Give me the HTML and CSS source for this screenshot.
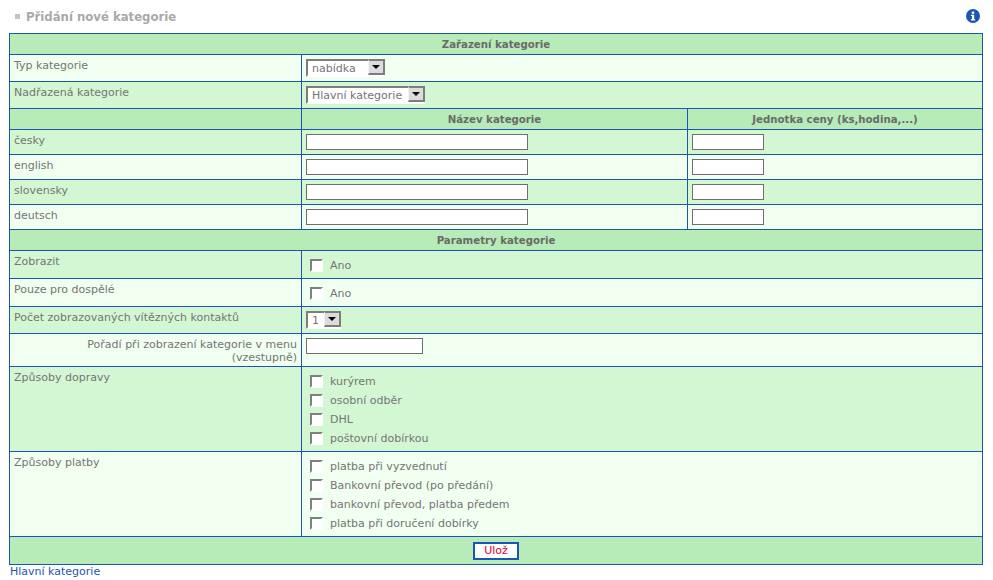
FILE: index.html
```html
<!DOCTYPE html>
<html lang="cs">
<head>
    <meta charset="UTF-8">
    <title>Přidání nové kategorie</title>
    <link rel="stylesheet" href="styles.css">
</head>
<body>
    <div class="title-bar">
        <h1><span class="bullet"></span>Přidání nové kategorie</h1>
        <svg class="info-icon" width="14" height="14" viewBox="0 0 14 14">
            <circle cx="7" cy="7" r="7" fill="#1c56b4"/>
            <rect x="5.8" y="2.6" width="2.4" height="2.2" fill="#fff"/>
            <path d="M4.9 5.8H8.2V10.2H9.2V11.4H4.9V10.2H5.9V7H4.9Z" fill="#fff"/>
        </svg>
    </div>

    <form class="category-form">
        <table class="form-table">
            <colgroup>
                <col class="col-label">
                <col class="col-name">
                <col class="col-unit">
            </colgroup>
            <tr class="head h21"><th colspan="3">Zařazení kategorie</th></tr>
            <tr class="light h27">
                <td class="label">Typ kategorie</td>
                <td colspan="2" class="field">
                    <span class="select"><select class="w-type"><option>nabídka</option></select><span class="arrow"></span></span>
                </td>
            </tr>
            <tr class="mid h27">
                <td class="label">Nadřazená kategorie</td>
                <td colspan="2" class="field">
                    <span class="select"><select class="w-parent"><option>Hlavní kategorie</option></select><span class="arrow"></span></span>
                </td>
            </tr>
            <tr class="head h21"><th></th><th>Název kategorie</th><th>Jednotka ceny (ks,hodina,...)</th></tr>
            <tr class="mid h25">
                <td class="label">česky</td>
                <td class="field"><input type="text" class="input-name"></td>
                <td class="field"><input type="text" class="input-unit"></td>
            </tr>
            <tr class="light h25">
                <td class="label">english</td>
                <td class="field"><input type="text" class="input-name"></td>
                <td class="field"><input type="text" class="input-unit"></td>
            </tr>
            <tr class="mid h25">
                <td class="label">slovensky</td>
                <td class="field"><input type="text" class="input-name"></td>
                <td class="field"><input type="text" class="input-unit"></td>
            </tr>
            <tr class="light h25">
                <td class="label">deutsch</td>
                <td class="field"><input type="text" class="input-name"></td>
                <td class="field"><input type="text" class="input-unit"></td>
            </tr>
            <tr class="head h21"><th colspan="3">Parametry kategorie</th></tr>
            <tr class="mid h28">
                <td class="label">Zobrazit</td>
                <td colspan="2" class="field checks"><label class="check"><span class="box"></span>Ano</label></td>
            </tr>
            <tr class="light h28">
                <td class="label">Pouze pro dospělé</td>
                <td colspan="2" class="field checks"><label class="check"><span class="box"></span>Ano</label></td>
            </tr>
            <tr class="mid h27">
                <td class="label">Počet zobrazovaných vítězných kontaktů</td>
                <td colspan="2" class="field">
                    <span class="select"><select class="w-count"><option>1</option></select><span class="arrow"></span></span>
                </td>
            </tr>
            <tr class="light h33">
                <td class="label right">Pořadí při zobrazení kategorie v menu<br>(vzestupně)</td>
                <td colspan="2" class="field"><input type="text" class="input-order"></td>
            </tr>
            <tr class="mid h85">
                <td class="label">Způsoby dopravy</td>
                <td colspan="2" class="field checks">
                    <label class="check"><span class="box"></span>kurýrem</label>
                    <label class="check"><span class="box"></span>osobní odběr</label>
                    <label class="check"><span class="box"></span>DHL</label>
                    <label class="check"><span class="box"></span>poštovní dobírkou</label>
                </td>
            </tr>
            <tr class="light h85">
                <td class="label">Způsoby platby</td>
                <td colspan="2" class="field checks">
                    <label class="check"><span class="box"></span>platba při vyzvednutí</label>
                    <label class="check"><span class="box"></span>Bankovní převod (po předání)</label>
                    <label class="check"><span class="box"></span>bankovní převod, platba předem</label>
                    <label class="check"><span class="box"></span>platba při doručení dobírky</label>
                </td>
            </tr>
            <tr class="head h28"><td colspan="3" class="submit"><button type="button" class="save-btn">Ulož</button></td></tr>
        </table>
    </form>
    <a class="crumb" href="#">Hlavní kategorie</a>
</body>
</html>
```

FILE: styles.css
```css
body {
    margin: 0;
    padding: 0 10px 0 9px;
    font-family: 'DejaVu Sans', Verdana, sans-serif;
    font-size: 11px;
    color: #757575;
    background-color: #fff;
}
.title-bar {
    display: flex;
    justify-content: space-between;
    align-items: center;
    height: 33px;
    padding: 0 3px 0 6px;
    box-sizing: border-box;
}
.title-bar h1 {
    display: flex;
    align-items: center;
    margin: 0;
    font-size: 11.7px;
    font-weight: bold;
    color: #a9a9a9;
}
.info-icon { margin-bottom: 1px; }
.bullet {
    width: 5px;
    height: 5px;
    margin-right: 6px;
    background-color: #c4c4c4;
}
.form-table {
    width: 974px;
    border-collapse: collapse;
    table-layout: fixed;
}
.col-label { width: 292px; }
.col-unit { width: 295px; }
.form-table th,
.form-table td {
    border: 1px solid #1c56b4;
    padding: 0;
}
.form-table th {
    font-size: 10.2px;
    text-align: center;
    color: #6a6a6a;
}
.head { background-color: #b7ebb7; }
.light { background-color: #f0fff0; }
.mid { background-color: #d3f7d3; }
.h21 { height: 21px; }
.h25 { height: 25px; }
.h27 { height: 27px; }
.h28 { height: 28px; }
.h33 { height: 33px; }
.h85 { height: 85px; }
.form-table .label {
    padding: 4px 4px 0 4px;
    vertical-align: top;
    line-height: 13px;
}
.form-table .right { text-align: right; }
.form-table .field {
    padding: 4px 4px 0 4px;
    vertical-align: top;
}
.form-table .checks { padding-top: 5px; }
input[type="text"] {
    display: block;
    box-sizing: border-box;
    height: 16px;
    margin: 0;
    padding: 0 2px;
    border: 1px solid #6f6f6f;
    background-color: #fff;
}
.input-name { width: 222px; }
.input-unit { width: 72px; }
.input-order { width: 117px; }
.select {
    position: relative;
    display: inline-block;
    vertical-align: top;
}
.select select {
    display: block;
    box-sizing: border-box;
    height: 18px;
    margin: 0;
    padding: 0 0 0 4px;
    appearance: none;
    border: 2px solid;
    border-color: #7d7d7d #fff #fff #7d7d7d;
    border-radius: 0;
    background-color: #fff;
    font-family: 'DejaVu Sans', Verdana, sans-serif;
    font-size: 11px;
    color: #757575;
}
.w-type { width: 79px; }
.w-parent { width: 119px; }
.w-count { width: 35px; }
.arrow {
    position: absolute;
    top: 0;
    right: 0;
    width: 17px;
    height: 16px;
    box-sizing: border-box;
    border: 2px solid;
    border-color: #7d7d7d #7d7d7d #7d7d7d #f4f4f4;
    border-left-width: 1px;
    background-color: #dcdcdc;
}
.arrow::after {
    content: "";
    position: absolute;
    top: 4px;
    left: 3px;
    border: 4px solid transparent;
    border-top: 4px solid #000;
    border-bottom: 0;
}
.check {
    display: flex;
    align-items: center;
    height: 19px;
}
.box {
    box-sizing: border-box;
    width: 13px;
    height: 13px;
    margin: 0 7px 0 4px;
    border: 2px solid;
    border-color: #808080 #fff #fff #808080;
    background-color: #fff;
}
.submit { text-align: center; }
.save-btn {
    display: block;
    width: 46px;
    height: 18px;
    margin: 0 auto;
    padding: 0;
    border: 2px solid #1c56b4;
    background-color: #fff;
    font-family: 'DejaVu Sans', Verdana, sans-serif;
    font-size: 11px;
    color: #dc0030;
}
.crumb {
    display: block;
    margin: 1px 0 0 1px;
    line-height: 12px;
    color: #1c56b4;
    text-decoration: none;
}
```
